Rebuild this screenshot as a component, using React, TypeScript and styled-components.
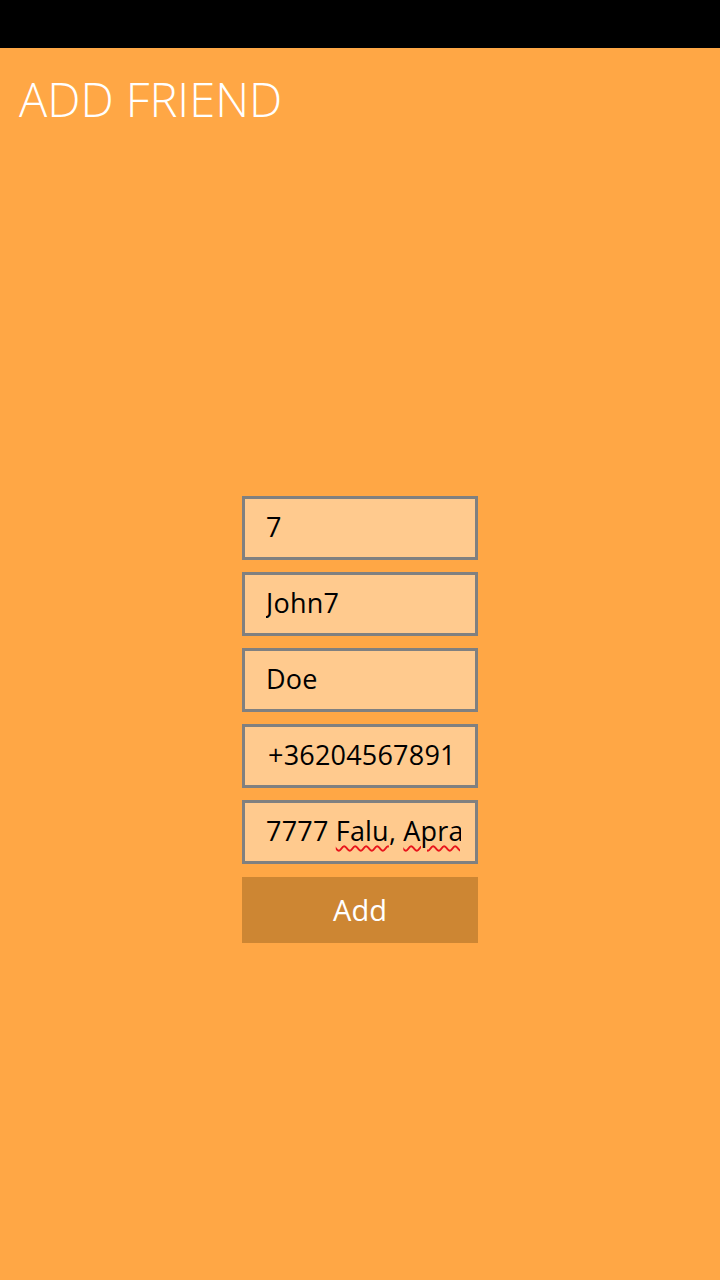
import React from 'react';
import styled, { createGlobalStyle } from 'styled-components';

const GlobalStyle = createGlobalStyle`
  html, body {
    margin: 0;
    padding: 0;
    background: #ffa745;
  }
  body {
    font-family: 'Open Sans', 'Noto Sans', sans-serif;
  }
`;

const Page = styled.div`
  width: 720px;
  height: 1280px;
  display: flex;
  flex-direction: column;
  background: #ffa745;
  overflow: hidden;
`;

const StatusBar = styled.div`
  height: 48px;
  background: #000;
  flex-shrink: 0;
`;

const Title = styled.h1`
  margin: 0;
  padding: 22px 0 0 19px;
  font-family: 'Open Sans', sans-serif;
  font-weight: 300;
  font-size: 47px;
  line-height: 58px;
  color: #fff;
`;

const Form = styled.div`
  margin-top: 368px;
  display: flex;
  flex-direction: column;
  align-items: center;
  gap: 12px;
`;

const Field = styled.div<{ $indent?: number }>`
  box-sizing: border-box;
  width: 236px;
  height: 64px;
  border: 3px solid #808080;
  background: #ffca8e;
  padding: 2px 14px 0 ${p => p.$indent ?? 21}px;
  display: flex;
  align-items: center;
  overflow: hidden;
  white-space: nowrap;
  font-family: 'Open Sans', sans-serif;
  font-size: 27px;
  letter-spacing: 0.2px;
  color: #000;
`;

const Clip = styled.span`
  display: block;
  overflow: hidden;
  width: 100%;
  line-height: 36px;
  padding: 4px 0 8px;
`;

const Misspelled = styled.span`
  text-decoration: underline wavy #e8141c;
  text-decoration-thickness: 2px;
  text-underline-offset: 4px;
`;

const AddButton = styled.button`
  box-sizing: border-box;
  width: 236px;
  height: 66px;
  margin-top: 1px;
  border: none;
  background: #cd8633;
  color: #fff;
  font-family: 'Open Sans', sans-serif;
  font-size: 29px;
  font-weight: 400;
  padding: 0 0 2px;
  cursor: pointer;
`;

export default function App() {
  return (
    <Page>
      <GlobalStyle />
      <StatusBar />
      <Title>ADD FRIEND</Title>
      <Form>
        <Field><Clip>7</Clip></Field>
        <Field><Clip>John7</Clip></Field>
        <Field><Clip>Doe</Clip></Field>
        <Field $indent={23}><Clip>+36204567891</Clip></Field>
        <Field>
          <Clip>
            7777 <Misspelled>Falu</Misspelled>, <Misspelled>Aprajafalva</Misspelled>
          </Clip>
        </Field>
        <AddButton>Add</AddButton>
      </Form>
    </Page>
  );
}
